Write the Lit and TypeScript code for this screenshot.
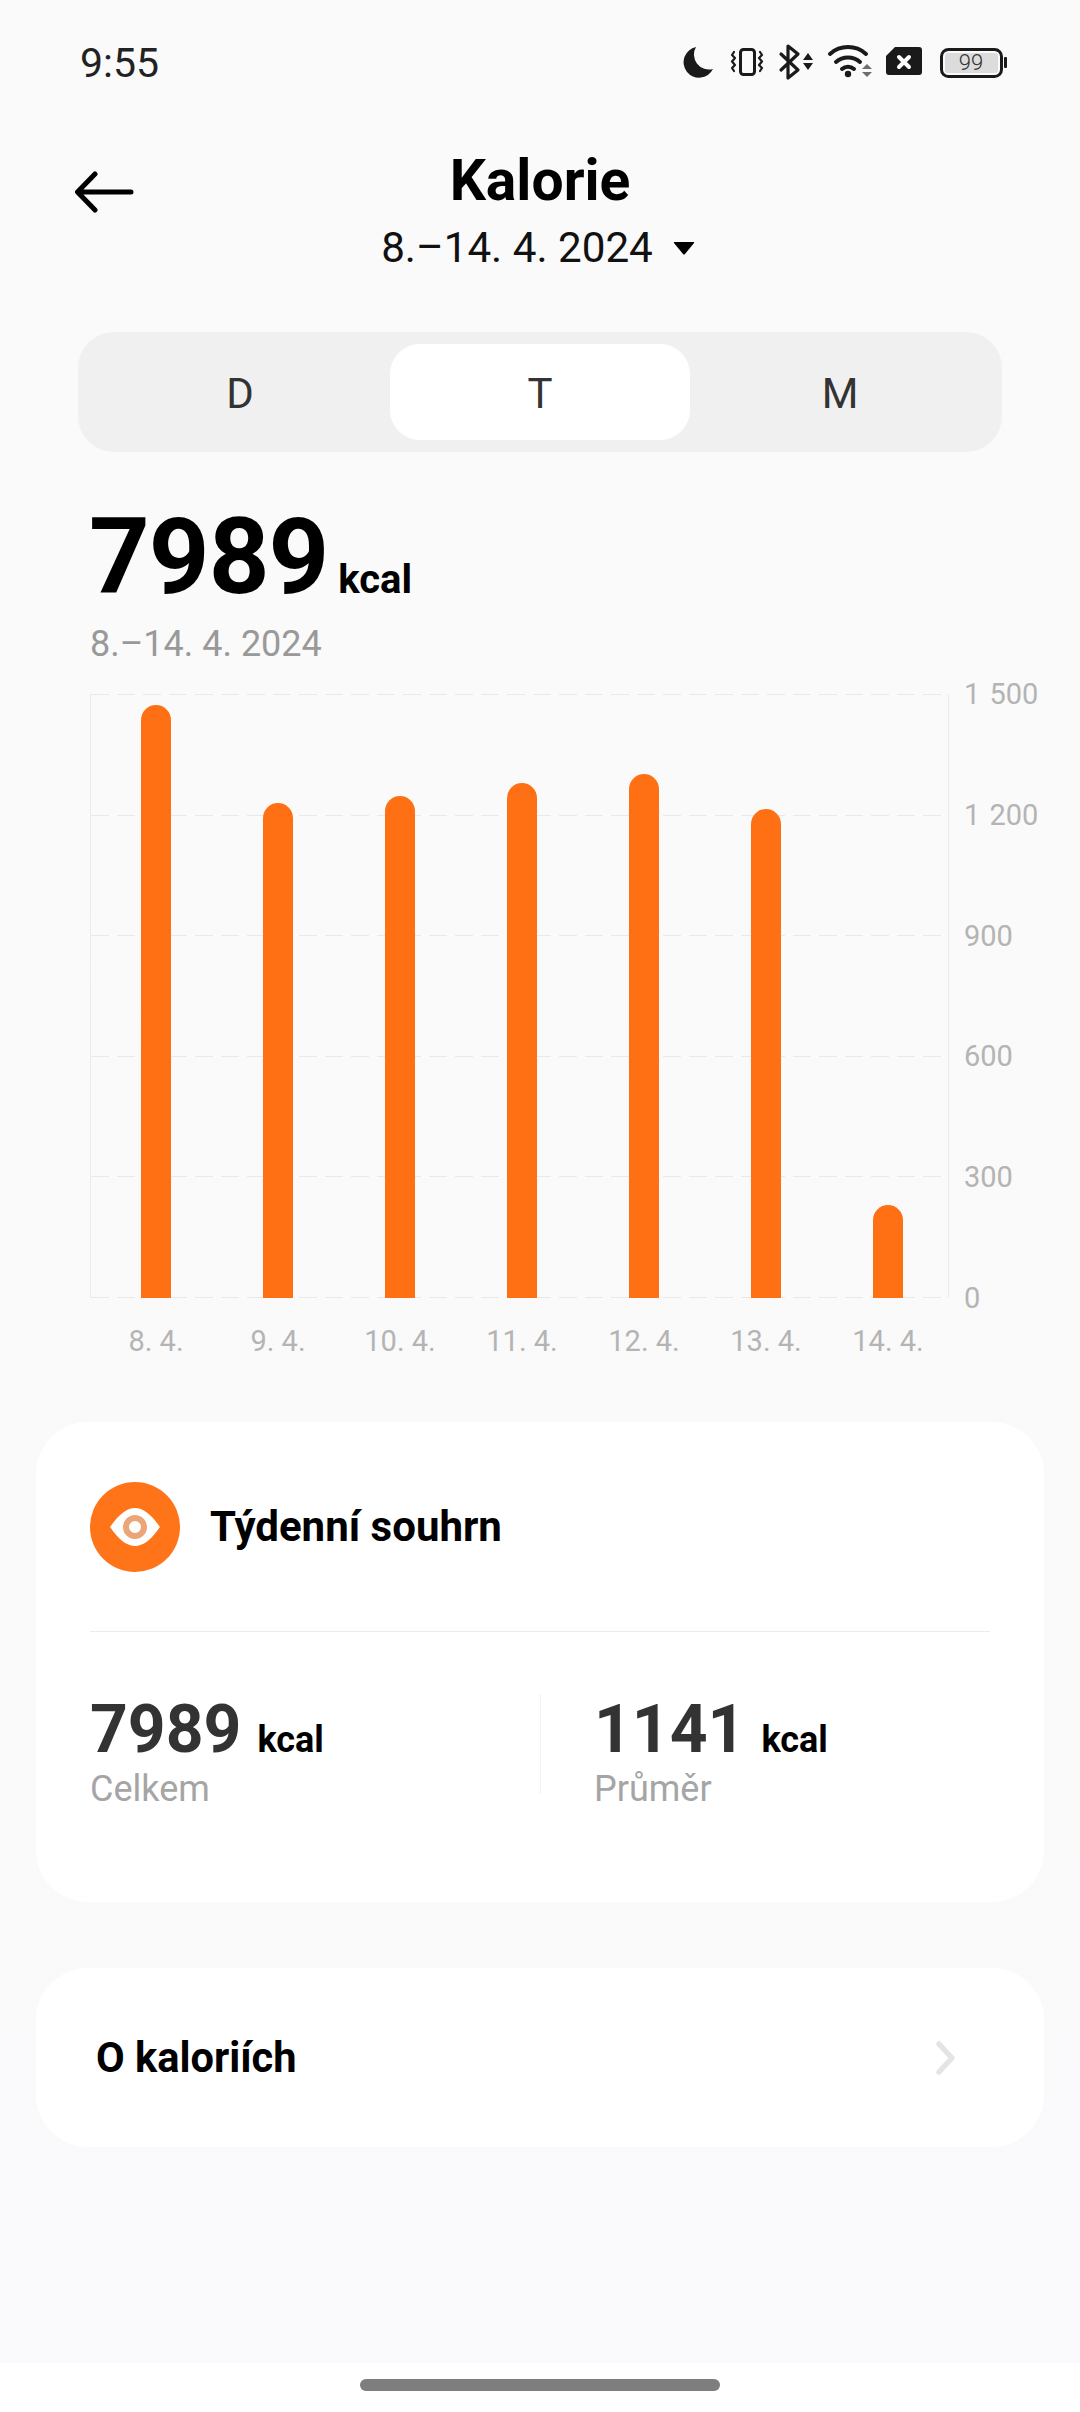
import { LitElement, html, css, svg } from "lit";
import { customElement } from "lit/decorators.js";

const BARS = [
  { label: "8. 4.", h: 593 },
  { label: "9. 4.", h: 495 },
  { label: "10. 4.", h: 502 },
  { label: "11. 4.", h: 515 },
  { label: "12. 4.", h: 524 },
  { label: "13. 4.", h: 489 },
  { label: "14. 4.", h: 93 },
];
const TICKS = ["1 500", "1 200", "900", "600", "300", "0"];

@customElement("app-root")
export class AppRoot extends LitElement {
  static styles = css`
    :host {
      display: block;
      width: 1080px;
      height: 2412px;
      overflow: hidden;
      background: #faf9fa;
      font-family: Roboto, "Noto Sans", sans-serif;
      color: #000;
    }
    .page { height: 2412px; display: flex; flex-direction: column; background: linear-gradient(#fafafa, #fafafa 900px, #faf9fb); }
    .status { height: 124px; flex: none; display: flex; align-items: flex-start; justify-content: space-between; padding: 0 67px 0 80px; box-sizing: border-box; }
    .time { font-size: 41px; line-height: 40px; margin-top: 43px; color: #222; }
    .sicons { display: block; margin-top: 42px; }
    .head { position: relative; height: 208px; flex: none; display: flex; flex-direction: column; align-items: center; }
    .back { position: absolute; left: 74px; top: 47px; }
    .title { font-size: 57px; font-weight: 700; line-height: 66px; margin-top: 24px; }
    .range { display: flex; align-items: center; gap: 20px; font-size: 42.2px; line-height: 50px; margin-top: 9px; color: #111; margin-left: -4px; }
    .seg { flex: none; margin: 0 78px; height: 120px; box-sizing: border-box; padding: 12px; border-radius: 36px; background: #f0f0f0; display: grid; grid-template-columns: repeat(3, 300px); }
    .seg div { display: flex; align-items: center; justify-content: center; font-size: 42px; color: #333; padding-top: 3px; box-sizing: border-box; border-radius: 30px; }
    .seg .on { background: #fff; }
    .total { flex: none; margin: 46px 0 0 89px; display: flex; align-items: baseline; height: 118px; }
    .total b { font-size: 106px; line-height: 118px; font-weight: 700; letter-spacing: -1px; }
    .total span { font-size: 40px; font-weight: 700; margin-left: 10px; }
    .sub { flex: none; margin-left: 90px; font-size: 36px; line-height: 44px; color: #999; margin-top: 6px; }
    .chart { flex: none; margin: 28px 0 0 90px; display: flex; width: 990px; }
    .plot { position: relative; box-sizing: border-box; width: 859px; height: 604px; border-left: 1px solid #ececec; border-right: 1px solid #ececec; display: flex; align-items: flex-end; padding-left: 4px; }
    .grid { position: absolute; left: 0; right: 0; height: 1px; background: repeating-linear-gradient(90deg, #e9e9e9 0 18px, transparent 18px 26px); }
    .col { position: relative; width: 122px; flex: none; display: flex; justify-content: center; }
    .bar { width: 30px; background: #ff7014; border-radius: 15px 15px 0 0; }
    .axis { display: flex; flex-direction: column; justify-content: space-between; height: 638px; margin: -17px 0 0 15px; font-size: 29px; line-height: 34px; color: #b4b4b4; word-spacing: 2px; }
    .xlabels { flex: none; display: flex; margin: 8px 0 0 95px; font-size: 29px; line-height: 36px; color: #b4b4b4; }
    .xlabels div { width: 122px; text-align: center; flex: none; }
    .card { flex: none; margin: 0 36px; background: #fff; border-radius: 52px; box-sizing: border-box; }
    .week { margin-top: 63px; height: 480px; padding: 0 54px; display: flex; flex-direction: column; }
    .wh { height: 210px; flex: none; display: flex; align-items: center; gap: 30px; border-bottom: 1px solid #ebebeb; box-sizing: border-box; }
    .wh div { font-size: 42px; font-weight: 700; }
    .stats { display: grid; grid-template-columns: 450px 1fr; margin-top: 62px; }
    .stat { height: 100px; }
    .stat + .stat { border-left: 1px solid #f2f2f2; padding-left: 53px; }
    .num { display: flex; align-items: baseline; height: 72px; }
    .num b { font-size: 66px; line-height: 72px; color: #333; font-weight: 700; }
    .num span { font-size: 36px; font-weight: 700; margin-left: 16px; color: #000; }
    .lab { font-size: 36px; line-height: 42px; color: #a5a5a5; margin-top: 2px; }
    .about { margin-top: 66px; height: 179px; padding: 0 87px 0 60px; display: flex; align-items: center; justify-content: space-between; }
    .about div { font-size: 41.6px; font-weight: 700; }
    .nav { margin-top: auto; height: 49px; flex: none; background: #fff; display: flex; justify-content: center; padding-top: 16px; box-sizing: border-box; }
    .nav div { width: 360px; height: 12px; border-radius: 6px; background: #7e7e7e; }
  `;

  private statusIcons() {
    return html`<svg class="sicons" width="330" height="42" viewBox="0 0 330 42" fill="none">
      ${svg`
      <path d="M13 5 A15.5 15.5 0 1 0 30 27 A15 15 0 0 1 13 5Z" fill="#1a1a1a"/>
      <g stroke="#1a1a1a" stroke-linejoin="round" stroke-linecap="round">
        <rect x="57.5" y="7.5" width="14" height="25" rx="3" stroke-width="3"/>
        <path d="M51 10 l-2 3 l3 3 l-3 3.500 l3 3.500 l-3 3 l2 3" stroke-width="2.2"/>
        <path d="M77 10 l2 3 l-3 3 l3 3.500 l-3 3.500 l3 3 l-2 3" stroke-width="2.2"/>
      </g>
      <path d="M98 12 L115 28 L105 36 V4 L115 12 L98 28" stroke="#1a1a1a" stroke-width="3.2" stroke-linejoin="round" stroke-linecap="round"/>
      <path d="M120 18 L125 11 L130 18Z M120 21 L125 28 L130 21Z" fill="#1a1a1a"/>
      <g stroke="#1a1a1a" stroke-width="4" stroke-linecap="round">
        <path d="M147 12 A27 27 0 0 1 183 12"/>
        <path d="M153 20 A18 18 0 0 1 177 20"/>
        <path d="M159 27 A9 9 0 0 1 171 27"/>
      </g>
      <circle cx="165" cy="32" r="3.2" fill="#1a1a1a"/>
      <path d="M179 27 L184 22 L189 27Z" fill="#6e6e6e"/>
      <path d="M179 30 L184 35 L189 30Z" fill="#6e6e6e"/>
      <path d="M212 5 H236 a3 3 0 0 1 3 3 V30 a3 3 0 0 1 -3 3 H206 a3 3 0 0 1 -3 -3 V14 Z" fill="#1a1a1a"/>
      <path d="M216 15 L226 25 M226 15 L216 25" stroke="#fff" stroke-width="4" stroke-linecap="round"/>
      <rect x="258.500" y="7.500" width="60" height="27" rx="7" stroke="#1a1a1a" stroke-width="3"/>
      <rect x="262" y="11" width="53" height="20" rx="3" fill="#dcdcdc"/>
      <rect x="321" y="15" width="3" height="11" rx="1" fill="#1a1a1a"/>
      <text x="288" y="28" text-anchor="middle" font-family="Roboto" font-size="22" font-weight="300" fill="#333">99</text>
      `}
    </svg>`;
  }

  render() {
    return html`<div class="page">
      <div class="status">
        <div class="time">9:55</div>
        ${this.statusIcons()}
      </div>
      <div class="head">
        <svg class="back" width="60" height="42" viewBox="0 0 60 42" fill="none" stroke="#000" stroke-width="5" stroke-linecap="round" stroke-linejoin="round">
          <path d="M57 21 H4 M21 3 L3.500 21 L21 39"/>
        </svg>
        <div class="title">Kalorie</div>
        <div class="range">
          <span>8.–14. 4. 2024</span>
          <svg width="22" height="14" viewBox="0 0 22 14"><path d="M1.500 1 H20.500 Q21.500 1 21 2 L12 13 Q11 14 10 13 L1 2 Q0.500 1 1.500 1Z" fill="#000"/></svg>
        </div>
      </div>
      <div class="seg"><div>D</div><div class="on">T</div><div>M</div></div>
      <div class="total"><b>7989</b><span>kcal</span></div>
      <div class="sub">8.–14. 4. 2024</div>
      <div class="chart">
        <div class="plot">
          ${[0, 1, 2, 3, 4, 5].map((i) => html`<div class="grid" style="top:${i * 120.6}px"></div>`)}
          ${BARS.map((b) => html`<div class="col"><div class="bar" style="height:${b.h}px"></div></div>`)}
        </div>
        <div class="axis">${TICKS.map((t) => html`<div>${t}</div>`)}</div>
      </div>
      <div class="xlabels">${BARS.map((b) => html`<div>${b.label}</div>`)}</div>
      <div class="card week">
        <div class="wh">
          <svg width="90" height="90" viewBox="0 0 90 90">
            <circle cx="45" cy="45" r="45" fill="#ff7418"/>
            <path d="M20 45 C29 32 37 26 45 26 C53 26 61 32 70 45 C61 58 53 64 45 64 C37 64 29 58 20 45Z" fill="#fff"/>
            <circle cx="45" cy="45" r="9" fill="none" stroke="#eba577" stroke-width="6"/>
          </svg>
          <div>Týdenní souhrn</div>
        </div>
        <div class="stats">
          <div class="stat"><div class="num"><b>7989</b><span>kcal</span></div><div class="lab">Celkem</div></div>
          <div class="stat"><div class="num"><b>1141</b><span>kcal</span></div><div class="lab">Průměr</div></div>
        </div>
      </div>
      <div class="card about">
        <div>O kaloriích</div>
        <svg width="22" height="36" viewBox="0 0 22 36" fill="none" stroke="#e4e4e6" stroke-width="5.500" stroke-linecap="round" stroke-linejoin="round"><path d="M4 4 L17 18 L4 32"/></svg>
      </div>
      <div class="nav"><div></div></div>
    </div>`;
  }
}
